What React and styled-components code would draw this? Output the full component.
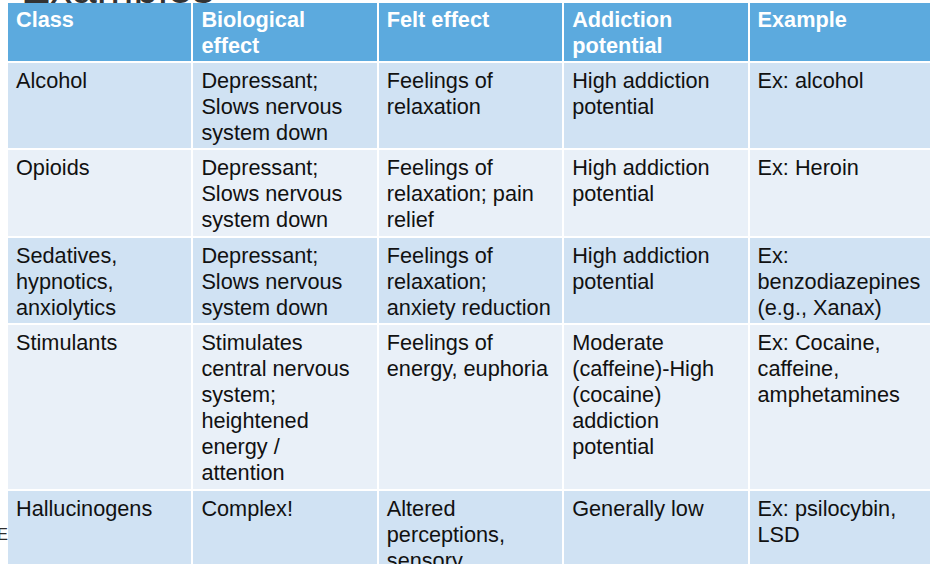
import React from "react";
import styled, { createGlobalStyle } from "styled-components";

const GlobalStyle = createGlobalStyle`
  html, body {
    margin: 0;
    padding: 0;
    background: #fff;
    overflow: hidden;
  }
  body {
    font-family: "Liberation Sans", Arial, sans-serif;
  }
`;

const Page = styled.div`
  width: 930px;
  height: 564px;
  overflow: hidden;
  display: flex;
  flex-direction: column;
`;

const TitleClip = styled.div`
  flex: none;
  height: 3px;
  overflow: hidden;
  padding-left: 21px;
`;

const Title = styled.h1`
  margin: -34px 0 0 0;
  font-size: 44px;
  line-height: 44px;
  font-weight: normal;
  color: #333;
  white-space: nowrap;
`;

const Body = styled.div`
  flex: none;
  display: flex;
  align-items: flex-start;
  background: #fff;
`;

const SideNote = styled.div`
  width: 8px;
  flex: none;
  overflow: hidden;
  display: flex;
  justify-content: flex-end;
  padding-top: 523px;
  font-size: 16px;
  line-height: 18px;
  color: #2e2e2e;
  white-space: nowrap;
`;

const Table = styled.div`
  display: flex;
  flex-direction: column;
  gap: 2px;
  background: #fff;
  flex: none;
`;

const Row = styled.div`
  display: grid;
  grid-template-columns: repeat(5, 183.4px);
  column-gap: 2px;
  height: ${({ h }) => h}px;
`;

const Cell = styled.div`
  padding: ${({ head }) => (head ? "4px" : "5px")} 8px 0 8px;
  background: ${({ tone }) =>
    tone === "head" ? "#5caade" : tone === "dark" ? "#d0e2f3" : "#e9f0f8"};
  color: ${({ tone }) => (tone === "head" ? "#fff" : "#111")};
  font-size: 21.7px;
  line-height: 26px;
  font-weight: ${({ tone }) => (tone === "head" ? "bold" : "normal")};
  white-space: nowrap;
  overflow: hidden;
`;

const depressant = ["Depressant;", "Slows nervous", "system down"];

const header = [["Class"], ["Biological", "effect"], ["Felt effect"], ["Addiction", "potential"], ["Example"]];

const rows = [
  {
    h: 85,
    cells: [["Alcohol"], depressant, ["Feelings of", "relaxation"], ["High addiction", "potential"], ["Ex: alcohol"]],
  },
  {
    h: 86,
    cells: [
      ["Opioids"],
      depressant,
      ["Feelings of", "relaxation; pain", "relief"],
      ["High addiction", "potential"],
      ["Ex: Heroin"],
    ],
  },
  {
    h: 85,
    cells: [
      ["Sedatives,", "hypnotics,", "anxiolytics"],
      depressant,
      ["Feelings of", "relaxation;", "anxiety reduction"],
      ["High addiction", "potential"],
      ["Ex:", "benzodiazepines", "(e.g., Xanax)"],
    ],
  },
  {
    h: 164,
    cells: [
      ["Stimulants"],
      ["Stimulates", "central nervous", "system;", "heightened", "energy /", "attention"],
      ["Feelings of", "energy, euphoria"],
      ["Moderate", "(caffeine)-High", "(cocaine)", "addiction", "potential"],
      ["Ex: Cocaine,", "caffeine,", "amphetamines"],
    ],
  },
  {
    h: 110,
    cells: [
      ["Hallucinogens"],
      ["Complex!"],
      ["Altered", "perceptions,", "sensory", "distortions"],
      ["Generally low"],
      ["Ex: psilocybin,", "LSD"],
    ],
  },
];

function Lines({ lines }) {
  return lines.map((l, i) => <div key={i}>{l}</div>);
}

export default function App() {
  return (
    <Page>
      <GlobalStyle />
      <TitleClip>
        <Title>Examples</Title>
      </TitleClip>
      <Body>
        <SideNote>cE</SideNote>
        <Table>
          <Row h={58}>
            {header.map((c, i) => (
              <Cell key={i} tone="head" head>
                <Lines lines={c} />
              </Cell>
            ))}
          </Row>
          {rows.map((r, ri) => (
            <Row key={ri} h={r.h}>
              {r.cells.map((c, ci) => (
                <Cell key={ci} tone={ri % 2 === 0 ? "dark" : "light"}>
                  <Lines lines={c} />
                </Cell>
              ))}
            </Row>
          ))}
        </Table>
      </Body>
    </Page>
  );
}
